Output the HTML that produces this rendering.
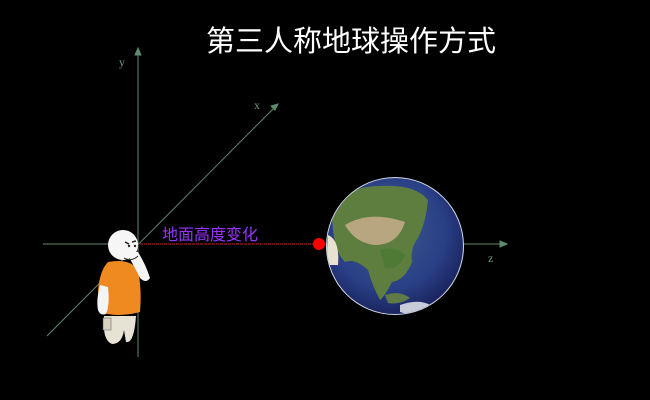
<!DOCTYPE html>
<html><head><meta charset="utf-8"><style>
html,body{margin:0;padding:0;background:#000;width:650px;height:400px;overflow:hidden}
.t{position:absolute;left:206px;width:290px;top:18px;text-align:center;color:#fff;font:29px "Liberation Sans","Noto Sans CJK SC",sans-serif;white-space:nowrap;letter-spacing:0}
</style></head><body>
<div class="t">第三人称地球操作方式</div>
<svg width="650" height="400" style="position:absolute;left:0;top:0">
<defs>
<radialGradient id="e" cx="45%" cy="40%" r="60%">
<stop offset="0" stop-color="#3d5a8a"/><stop offset="0.7" stop-color="#2a3f86"/><stop offset="1" stop-color="#1a2560"/></radialGradient>
<clipPath id="c"><circle cx="395" cy="246" r="68"/></clipPath>
</defs>
<g stroke="#5f8a6f" stroke-width="1" fill="#5f8a6f">
<line x1="138" y1="50" x2="138" y2="357"/><path d="M138 48 l-3 7 h6z"/>
<line x1="43" y1="244" x2="135" y2="244"/>
<line x1="463" y1="244" x2="505" y2="244"/><path d="M507 244 l-7 -3 v6z"/>
<line x1="47" y1="336" x2="276" y2="106"/><path d="M278 104 l-7 2 l4 4z"/>
</g>
<g fill="#6f9a7f" font-family="Liberation Serif,serif" font-size="12">
<text x="119" y="66">y</text><text x="254" y="109">x</text><text x="488" y="262">z</text></g>
<line x1="140" y1="244" x2="318" y2="244" stroke="#cc2020" stroke-width="1" stroke-dasharray="3,1"/>
<text x="162" y="240" fill="#9933ff" font-family="Liberation Sans,Noto Sans CJK SC,sans-serif" font-size="16">地面高度变化</text>
<circle cx="395" cy="246" r="69" fill="#cfd8e8"/>
<circle cx="395" cy="246" r="68" fill="url(#e)"/>
<g clip-path="url(#c)">
<path d="M332 210 Q345 186 380 186 Q415 184 428 200 Q426 222 418 238 Q410 248 412 262 Q405 280 392 282 Q385 296 380 300 Q372 285 368 270 Q355 258 345 262 Q332 250 332 210z" fill="#5d7e3e"/>
<path d="M345 225 Q370 210 405 222 Q398 245 375 245 Q355 243 345 225z" fill="#b7a680"/>
<path d="M380 250 Q395 245 405 255 Q400 270 385 268z" fill="#4f7a35"/>
<path d="M328 235 Q340 240 338 265 L326 265z" fill="#e8e2d0"/>
<path d="M385 295 Q400 290 410 298 Q400 305 388 303z" fill="#5f7a45"/>
<path d="M400 305 Q420 298 432 306 Q418 318 400 312z" fill="#c8ccd8"/>
</g>
<circle cx="319" cy="244" r="6" fill="#ff0000"/>
<!-- person -->
<path d="M104 316 Q102 340 112 344 Q122 344 124 330 L126 342 Q134 344 136 316z" fill="#e6e2d4"/>
<rect x="103" y="318" width="8" height="12" fill="#d8d2c0" stroke="#555" stroke-width="0.5"/>
<path d="M108 262 Q100 270 98 290 L100 312 Q118 318 140 312 Q142 290 138 270 Q130 258 108 262z" fill="#ee8a20"/>
<path d="M100 285 Q96 300 98 310 Q100 316 106 314 Q110 305 108 287z" fill="#f4f4f4"/>
<path d="M126 252 Q132 262 140 278 Q146 284 150 278 Q146 265 138 252z" fill="#f4f4f4"/>
<circle cx="123" cy="245" r="15" fill="#f6f6f6"/>
<path d="M124 258 Q132 262 138 256" stroke="#333" stroke-width="1" fill="none"/>
<path d="M125 242 l4 2 M132 242 l4 -1" stroke="#222" stroke-width="1.5"/>
<circle cx="129" cy="246" r="1.2" fill="#222"/><circle cx="135" cy="246" r="1.2" fill="#222"/>
</svg>
</body></html>
